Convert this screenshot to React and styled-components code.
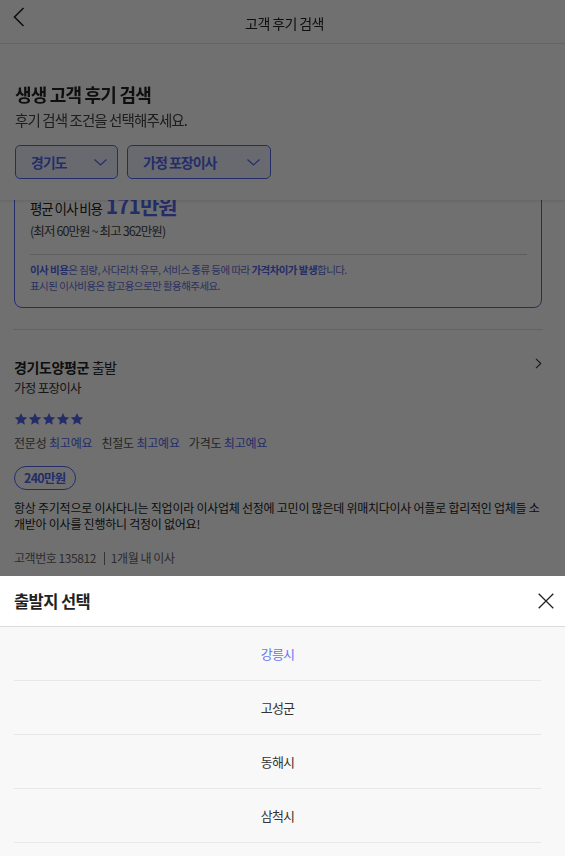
import React from "react";
import styled, { createGlobalStyle } from "styled-components";

const BRAND = "#5468f0";

const GlobalStyle = createGlobalStyle`
	* { box-sizing: border-box; }
	body {
		margin: 0;
		background: #ffffff;
		font-family: "Noto Sans CJK KR", "Noto Sans", sans-serif;
		color: #222;
	}
`;

const ratings = [
	{ label: "전문성", value: "최고예요" },
	{ label: "친절도", value: "최고예요" },
	{ label: "가격도", value: "최고예요" },
];

const regions = ["강릉시", "고성군", "동해시", "삼척시"];

function Star() {
	return (
		<svg width="14" height="14" viewBox="0 0 24 24">
			<path
				d="M12 1.5l3.2 7 7.6.8-5.7 5.1 1.6 7.5L12 18l-6.7 3.9 1.6-7.5L1.2 9.3l7.6-.8z"
				fill={BRAND}
			/>
		</svg>
	);
}

function ChevronDown() {
	return (
		<svg width="13" height="7" viewBox="0 0 13 7">
			<path d="M0.5 0.5L6.5 6L12.5 0.5" fill="none" stroke={BRAND} strokeWidth="1.2" />
		</svg>
	);
}

export default function App() {
	return (
		<>
			<GlobalStyle />
			{/********** fixed top **************/}
			<TopArea>
				<TopBar>
					<BackBtn>
						<svg width="12" height="20" viewBox="0 0 12 20">
							<path d="M10.5 1L1.5 10L10.5 19" fill="none" stroke="#222" strokeWidth="1.6" />
						</svg>
					</BackBtn>
					<TopTitle>고객 후기 검색</TopTitle>
				</TopBar>
				<SearchSection>
					<Heading>생생 고객 후기 검색</Heading>
					<SubHeading>후기 검색 조건을 선택해주세요.</SubHeading>
					<SelectRow>
						<SelectBox $w={103}>
							<SelectFont>경기도</SelectFont>
							<ChevronDown />
						</SelectBox>
						<SelectBox $w={144}>
							<SelectFont>가정 포장이사</SelectFont>
							<ChevronDown />
						</SelectBox>
					</SelectRow>
				</SearchSection>
			</TopArea>

			{/********** content **************/}
			<Content>
				<PriceCard>
					<AvgLine>
						<AvgLabel>평균 이사 비용</AvgLabel>
						<AvgValue>171만원</AvgValue>
					</AvgLine>
					<RangeFont>(최저 60만원 ~ 최고 362만원)</RangeFont>
					<CardDivider />
					<NoteP>
						<b>이사 비용</b>은 짐량, 사다리차 유무, 서비스 종류 등에 따라 <b>가격차이가 발생</b>합니다.
						<br />
						표시된 이사비용은 참고용으로만 활용해주세요.
					</NoteP>
				</PriceCard>

				<Review>
					<ReviewHead>
						<ReviewTitle>
							<b>경기도양평군</b> 출발
						</ReviewTitle>
						<svg width="7" height="11" viewBox="0 0 7 11">
							<path d="M1 0.8L5.8 5.5L1 10.2" fill="none" stroke="#333" strokeWidth="1.1" />
						</svg>
					</ReviewHead>
					<ReviewSub>가정 포장이사</ReviewSub>
					<StarRow>
						{[0, 1, 2, 3, 4].map((i) => (
							<Star key={i} />
						))}
					</StarRow>
					<RatingRow>
						{ratings.map((r, i) => (
							<RatingItem key={i}>
								{r.label} <RatingValue>{r.value}</RatingValue>
							</RatingItem>
						))}
					</RatingRow>
					<PriceBadge>240만원</PriceBadge>
					<ReviewText>
						항상 주기적으로 이사다니는 직업이라 이사업체 선정에 고민이 많은데 위매치다이사 어플로 합리적인 업체들 소개받아 이사를 진행하니 걱정이 없어요!
					</ReviewText>
					<MetaRow>
						<span>고객번호 135812</span>
						<MetaBar />
						<span>1개월 내 이사</span>
					</MetaRow>
				</Review>
			</Content>

			{/********** dim + bottom sheet **************/}
			<Dim />
			<Sheet>
				<SheetHead>
					<SheetTitle>출발지 선택</SheetTitle>
					<svg width="16" height="16" viewBox="0 0 16 16">
						<path d="M0.7 0.7L15.3 15.3M15.3 0.7L0.7 15.3" stroke="#222" strokeWidth="1.3" />
					</svg>
				</SheetHead>
				<SheetList>
					{regions.map((name, i) => (
						<SheetItem key={name} $active={i === 0}>
							{name}
						</SheetItem>
					))}
				</SheetList>
			</Sheet>
		</>
	);
}

// top
const TopArea = styled.header`
	position: fixed;
	top: 0;
	left: 0;
	right: 0;
	z-index: 10;
	background: #fff;
	box-shadow: 0 1px 3px rgba(0, 0, 0, 0.12);
`;

const TopBar = styled.div`
	position: relative;
	display: flex;
	align-items: center;
	justify-content: center;
	height: 44px;
	padding-top: 3px;
	border-bottom: 1px solid #e4e4e4;
`;

const BackBtn = styled.div`
	position: absolute;
	left: 13px;
	top: 7px;
	display: flex;
`;

const TopTitle = styled.span`
	font-size: 14px;
	letter-spacing: -0.6px;
	color: #222;
	padding-left: 4px;
`;

const SearchSection = styled.div`
	display: flex;
	flex-direction: column;
	padding: 37px 14px 21px 15px;
`;

const Heading = styled.h1`
	margin: 0;
	font-size: 18px;
	line-height: 26px;
	font-weight: 700;
	letter-spacing: -0.8px;
	color: #222;
`;

const SubHeading = styled.p`
	margin: 3px 0 0;
	font-size: 14.5px;
	line-height: 20px;
	letter-spacing: -0.9px;
	color: #444;
`;

const SelectRow = styled.div`
	display: flex;
	gap: 9px;
	margin-top: 15px;
`;

const SelectBox = styled.div`
	display: flex;
	align-items: center;
	justify-content: space-between;
	width: ${(p) => p.$w}px;
	height: 34px;
	padding: 0 10px 0 15px;
	border: 1px solid ${BRAND};
	border-radius: 5px;
	background: #eef0ff;
`;

const SelectFont = styled.span`
	font-size: 14px;
	font-weight: 700;
	letter-spacing: -1px;
	color: ${BRAND};
`;

// content
const Content = styled.main`
	display: flex;
	flex-direction: column;
	padding: 185px 23px 0 14px;
`;

const PriceCard = styled.section`
	display: flex;
	flex-direction: column;
	padding: 7px 14px 13px 15px;
	border: 1px solid ${BRAND};
	border-radius: 8px;
`;

const AvgLine = styled.div`
	display: flex;
	align-items: baseline;
	height: 24px;
	line-height: 24px;
	gap: 4px;
`;

const AvgLabel = styled.span`
	font-size: 13.5px;
	letter-spacing: -1.1px;
	color: #222;
`;

const AvgValue = styled.span`
	font-size: 21px;
	font-weight: 700;
	letter-spacing: -1px;
	color: ${BRAND};
`;

const RangeFont = styled.span`
	margin-top: 4px;
	font-size: 12.5px;
	line-height: 20px;
	letter-spacing: -0.9px;
	color: #444;
`;

const CardDivider = styled.div`
	height: 1px;
	margin: 13px 0 0;
	background: #d6d6d6;
`;

const NoteP = styled.p`
	margin: 7px 0 0;
	font-size: 10.5px;
	line-height: 16px;
	letter-spacing: -0.55px;
	color: #6571d8;

	b {
		font-weight: 700;
		color: ${BRAND};
	}
`;

const Review = styled.article`
	display: flex;
	flex-direction: column;
	margin: 21px -1px 0;
	padding: 26px 1px 0;
	border-top: 1px solid #e0e0e0;
`;

const ReviewHead = styled.div`
	display: flex;
	align-items: flex-start;
	justify-content: space-between;

	svg {
		margin-top: 2px;
	}
`;

const ReviewTitle = styled.span`
	font-size: 14px;
	line-height: 22px;
	letter-spacing: -0.4px;
	color: #222;

	b {
		font-weight: 700;
	}
`;

const ReviewSub = styled.span`
	font-size: 12.5px;
	line-height: 20px;
	letter-spacing: -0.7px;
	color: #333;
`;

const StarRow = styled.div`
	display: flex;
	margin-top: 14px;
	height: 14px;
	align-items: center;
`;

const RatingRow = styled.div`
	display: flex;
	gap: 9px;
	margin-top: 7px;
`;

const RatingItem = styled.span`
	font-size: 12px;
	line-height: 20px;
	letter-spacing: -0.2px;
	color: #555;
`;

const RatingValue = styled.span`
	color: ${BRAND};
`;

const PriceBadge = styled.span`
	align-self: flex-start;
	margin-top: 13px;
	height: 24px;
	line-height: 22px;
	padding: 0 9px;
	border: 1px solid ${BRAND};
	border-radius: 12px;
	font-size: 12.5px;
	font-weight: 700;
	letter-spacing: -0.7px;
	color: ${BRAND};
`;

const ReviewText = styled.p`
	margin: 10px 0 0;
	font-size: 12px;
	line-height: 16px;
	letter-spacing: -0.25px;
	color: #222;
`;

const MetaRow = styled.div`
	display: flex;
	align-items: center;
	margin-top: 16px;
	font-size: 12px;
	line-height: 20px;
	letter-spacing: -0.45px;
	color: #666;
`;

const MetaBar = styled.span`
	width: 1px;
	height: 13px;
	margin: 0 6px 0 8px;
	background: #777;
`;

// sheet
const Dim = styled.div`
	position: fixed;
	inset: 0;
	z-index: 20;
	background: rgba(0, 0, 0, 0.56);
`;

const Sheet = styled.div`
	position: fixed;
	left: 0;
	right: 0;
	bottom: 0;
	height: 280px;
	z-index: 30;
	display: flex;
	flex-direction: column;
	background: #f8f8f8;
	overflow: hidden;
`;

const SheetHead = styled.div`
	flex-shrink: 0;
	display: flex;
	align-items: center;
	justify-content: space-between;
	height: 51px;
	padding: 0 11px 0 14px;
	background: #fff;
	border-bottom: 1px solid #dcdcdc;
`;

const SheetTitle = styled.span`
	font-size: 16.5px;
	font-weight: 700;
	letter-spacing: -0.6px;
	color: #222;
`;

const SheetList = styled.ul`
	flex-shrink: 0;
	margin: 0;
	padding: 0 24px 0 14px;
	list-style: none;
`;

const SheetItem = styled.li`
	display: flex;
	align-items: center;
	justify-content: center;
	height: 54px;
	border-bottom: 1px solid #e8e8e8;
	font-size: 13px;
	letter-spacing: -0.8px;
	color: ${(p) => (p.$active ? "#6377f2" : "#333")};
`;
